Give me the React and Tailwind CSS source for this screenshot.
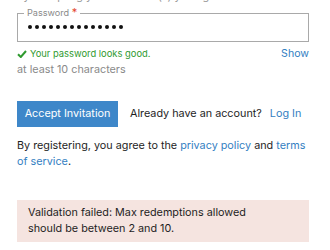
export default function App() {
  const dots = Array.from({ length: 14 });
  return (
    <div className="w-[330px] h-[250px] overflow-hidden bg-white" style={{ fontFamily: 'Inter, "Liberation Sans", sans-serif' }}>
      <div className="pl-[17px] pr-[21px]">
        <div className="h-[3px] overflow-hidden relative">
          <div className="text-[10.8px] leading-[12px] text-[#999] -mt-[9px]">
            by accepting your invitation(s) you agree
          </div>
        </div>
        <fieldset className="border border-[#a9a9a9] h-[35px] mt-[4px] pl-[6px] pr-[8px] pb-[0px]">
          <legend className="text-[9.1px] leading-[12px] text-[#8a8a8a] px-[3px]">
            Password <span className="text-[#e4452a] text-[11px] leading-[10px]">*</span>
          </legend>
          <div className="flex gap-[3px] mt-[6px] pl-[4px]">
            {dots.map((_, i) => (
              <div key={i} className="w-[4px] h-[4px] rounded-full bg-[#111]"></div>
            ))}
          </div>
        </fieldset>
        <div className="flex items-center justify-between mt-[5px] h-[14px]">
          <div className="flex items-center text-[9.4px] text-[#2f9a2f]">
            <svg width="10" height="8" viewBox="0 0 10 8" className="mr-[3px]"><path d="M1 4.2 L3.8 7 L9 1" stroke="#2f9a2f" strokeWidth="2" fill="none" /></svg>
            Your password looks good.
          </div>
          <div className="text-[10.6px] text-[#3480c2]">Show</div>
        </div>
        <div className="text-[10.8px] text-[#8a8a8a] mt-[2px] leading-[14px]">at least 10 characters</div>
        <div className="flex items-center mt-[24px]">
          <button className="bg-[#3e87c9] text-white text-[10.8px] h-[26px] w-[101px] flex items-center justify-center">Accept Invitation</button>
          <span className="ml-[12px] text-[10.8px] text-[#1e1e1e]">Already have an account?</span>
          <span className="ml-[8px] text-[10.8px] text-[#3480c2]">Log In</span>
        </div>
        <p className="text-[10.8px] leading-[16px] text-[#1e1e1e] mt-[11px]">
          By registering, you agree to the <span className="text-[#3480c2]">privacy policy</span> and <span className="text-[#3480c2]">terms of service</span>.
        </p>
        <div className="bg-[#f5e4e0] mt-[30px] w-[292px] h-[42px] px-[11px] pt-[5px] text-[10.8px] leading-[16px] text-[#1e1e1e]">
          <div className="w-[225px]">Validation failed: Max redemptions allowed should be between 2 and 10.</div>
        </div>
      </div>
    </div>
  );
}
